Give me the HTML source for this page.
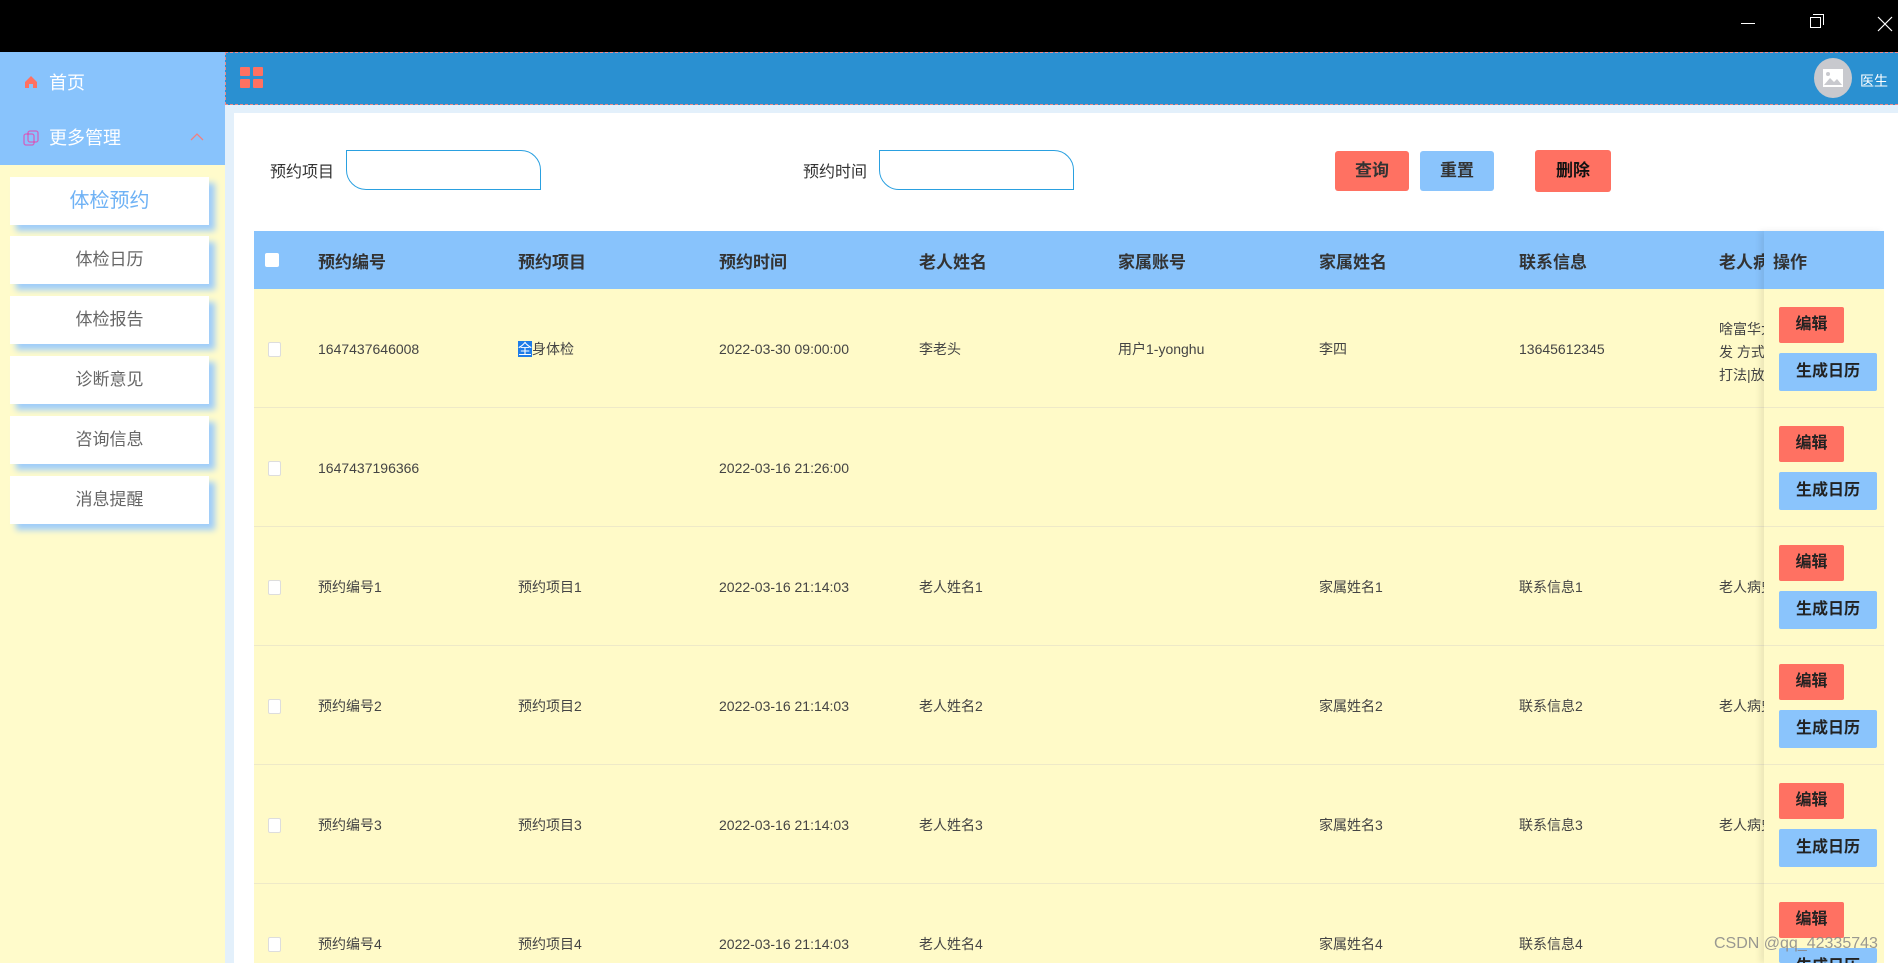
<!DOCTYPE html>
<html style="overflow:hidden;height:963px"><head><meta charset="utf-8">
<style>
*{box-sizing:border-box;margin:0;padding:0}
html{width:1898px;height:963px;overflow:hidden}
body{width:1898px;height:963px;overflow:hidden;position:relative;background:#fff;font-family:"Liberation Sans","Noto Sans CJK SC",sans-serif;}
.a{position:absolute}
.top{left:0;top:0;width:1898px;height:52px;background:#000}
.side{left:0;top:52px;width:225px;height:911px;background:#fffbcb}
.sideTop{left:0;top:52px;width:225px;height:113px;background:#88c3fc}
.mi{color:#fff;font-size:18px}
.card{left:10px;width:199px;height:48px;background:#fff;box-shadow:6px 6px 6px #9fcdfa;text-align:center;line-height:48px;color:#666;font-size:17px}
.hdr{left:225px;top:52px;width:1673px;height:53px;background:#2a90d1;border-top:1px dashed #e88;border-bottom:1px dashed #e88;border-left:1px dashed #e88}
.strip{left:225px;top:105px;width:1673px;height:858px;background:#e3f0fb}
.main{left:234px;top:113px;width:1664px;height:850px;background:#fff}
.lbl{font-size:16px;color:#333}
.inp{height:40px;width:195px;border:1px solid #2aa0e0;border-radius:0 20px 0 20px;background:#fff}
.btn{height:40px;font-size:17px;font-weight:bold;color:#333;text-align:center;line-height:40px;border-radius:3px}
.red{background:#ff7162}.blue{background:#8ac4fc}
.th{left:254px;top:231px;width:1630px;height:58px;background:#88c3fc}
.row{left:254px;width:1630px;height:119px;background:#fffac8;border-bottom:1px solid #eee9c8}
.h{font-size:17px;font-weight:bold;color:#333;top:248px}
.c{font-size:14px;color:#444;line-height:16px}
.cb{width:13px;height:15px;background:#fff;border:1px solid #ddd;border-radius:2px}
.op{left:1764px;top:231px;width:120px;height:732px;box-shadow:-4px 0 6px rgba(0,0,0,0.08)}
.ob{font-size:16px;font-weight:bold;color:#222;text-align:center;border-radius:2px}
</style></head><body>
<div class="a top"></div>
<div class="a" style="left:1741px;top:23px;width:14px;height:1px;background:#fff"></div>
<div class="a" style="left:1810px;top:17px;width:11px;height:11px;border:1px solid #fff"></div>
<div class="a" style="left:1813px;top:14px;width:11px;height:11px;border-top:1px solid #fff;border-right:1px solid #fff"></div>
<svg class="a" style="left:1877px;top:16px" width="16" height="16"><path d="M1 1L15 15M15 1L1 15" stroke="#fff" stroke-width="1.2"/></svg>

<div class="a side"></div>
<div class="a sideTop"></div>
<svg class="a" style="left:24px;top:75px" width="14" height="14"><path d="M7 1L1 7V13H5V9H9V13H13V7Z" fill="#ff7162"/></svg>
<div class="a mi" style="left:49px;top:69px">首页</div>
<svg class="a" style="left:23px;top:130px" width="16" height="16"><rect x="5" y="1" width="10" height="11" rx="2" fill="none" stroke="#f29" stroke-opacity=".6" stroke-width="1.3"/><rect x="1" y="4" width="10" height="11" rx="2" fill="none" stroke="#f29" stroke-opacity=".6" stroke-width="1.3"/></svg>
<div class="a mi" style="left:49px;top:124px">更多管理</div>
<svg class="a" style="left:190px;top:133px" width="14" height="8"><path d="M1 7L7 1L13 7" fill="none" stroke="#f08080" stroke-width="1.3"/></svg>
<div class="a card" style="top:177px;color:#6fb2f5;font-size:20px">体检预约</div>
<div class="a card" style="top:236px">体检日历</div>
<div class="a card" style="top:296px">体检报告</div>
<div class="a card" style="top:356px">诊断意见</div>
<div class="a card" style="top:416px">咨询信息</div>
<div class="a card" style="top:476px">消息提醒</div>

<div class="a hdr"></div>
<div class="a" style="left:240px;top:67px;width:10px;height:9px;background:#ff7162;border-radius:1px"></div>
<div class="a" style="left:253px;top:67px;width:10px;height:9px;background:#ff7162;border-radius:1px"></div>
<div class="a" style="left:240px;top:79px;width:10px;height:9px;background:#ff7162;border-radius:1px"></div>
<div class="a" style="left:253px;top:79px;width:10px;height:9px;background:#ff7162;border-radius:1px"></div>
<div class="a" style="left:1814px;top:58px;width:38px;height:40px;border-radius:50%;background:#c8c9ce"></div>
<svg class="a" style="left:1822px;top:68px" width="22" height="20"><rect x="1" y="1" width="20" height="18" fill="#fff"/><circle cx="6" cy="6" r="2" fill="#c8c9ce"/><path d="M2 17L8 10L12 14L15 11L20 17Z" fill="#c8c9ce"/></svg>
<div class="a" style="left:1860px;top:71px;color:#fff;font-size:14px">医生</div>

<div class="a strip"></div>
<div class="a main"></div>
<div class="a lbl" style="left:270px;top:158px">预约项目</div>
<div class="a inp" style="left:346px;top:150px"></div>
<div class="a lbl" style="left:803px;top:158px">预约时间</div>
<div class="a inp" style="left:879px;top:150px"></div>
<div class="a btn red" style="left:1335px;top:151px;width:74px">查询</div>
<div class="a btn blue" style="left:1420px;top:151px;width:74px">重置</div>
<div class="a btn red" style="left:1535px;top:150px;width:76px;height:42px;line-height:42px;color:#111">删除</div>

<div class="a th"></div>
<div class="a" style="left:265px;top:253px;width:14px;height:14px;background:#fff;border-radius:2px"></div>
<div class="a h" style="left:318px">预约编号</div>
<div class="a h" style="left:518px">预约项目</div>
<div class="a h" style="left:719px">预约时间</div>
<div class="a h" style="left:919px">老人姓名</div>
<div class="a h" style="left:1118px">家属账号</div>
<div class="a h" style="left:1319px">家属姓名</div>
<div class="a h" style="left:1519px">联系信息</div>
<div class="a h" style="left:1719px;width:45px;overflow:hidden;white-space:nowrap">老人病史</div>
<div class="a h" style="left:1773px">操作</div>

<div class="a row" style="top:289px"></div>
<div class="a row" style="top:408px"></div>
<div class="a row" style="top:527px"></div>
<div class="a row" style="top:646px"></div>
<div class="a row" style="top:765px"></div>
<div class="a row" style="top:884px;height:79px;border:none"></div>

<div class="a cb" style="left:268px;top:342px"></div>
<div class="a c" style="left:318px;top:341px">1647437646008</div>
<div class="a c" style="left:518px;top:341px"><span style="background:#1e7ce8;color:#fff">全</span>身体检</div>
<div class="a c" style="left:719px;top:341px">2022-03-30 09:00:00</div>
<div class="a c" style="left:919px;top:341px">李老头</div>
<div class="a c" style="left:1118px;top:341px">用户1-yonghu</div>
<div class="a c" style="left:1319px;top:341px">李四</div>
<div class="a c" style="left:1519px;top:341px">13645612345</div>
<div class="a c" style="left:1719px;top:318px;width:45px;overflow:hidden;white-space:nowrap;line-height:23px">啥富华大<br>发 方式<br>打法|放</div>
<div class="a cb" style="left:268px;top:461px"></div>
<div class="a c" style="left:318px;top:460px">1647437196366</div>
<div class="a c" style="left:719px;top:460px">2022-03-16 21:26:00</div>

<div class="a cb" style="left:268px;top:580px"></div>
<div class="a c" style="left:318px;top:579px">预约编号1</div><div class="a c" style="left:518px;top:579px">预约项目1</div><div class="a c" style="left:719px;top:579px">2022-03-16 21:14:03</div><div class="a c" style="left:919px;top:579px">老人姓名1</div><div class="a c" style="left:1319px;top:579px">家属姓名1</div><div class="a c" style="left:1519px;top:579px">联系信息1</div><div class="a c" style="left:1719px;top:579px;width:45px;overflow:hidden;white-space:nowrap">老人病史1</div>
<div class="a cb" style="left:268px;top:699px"></div>
<div class="a c" style="left:318px;top:698px">预约编号2</div><div class="a c" style="left:518px;top:698px">预约项目2</div><div class="a c" style="left:719px;top:698px">2022-03-16 21:14:03</div><div class="a c" style="left:919px;top:698px">老人姓名2</div><div class="a c" style="left:1319px;top:698px">家属姓名2</div><div class="a c" style="left:1519px;top:698px">联系信息2</div><div class="a c" style="left:1719px;top:698px;width:45px;overflow:hidden;white-space:nowrap">老人病史2</div>
<div class="a cb" style="left:268px;top:818px"></div>
<div class="a c" style="left:318px;top:817px">预约编号3</div><div class="a c" style="left:518px;top:817px">预约项目3</div><div class="a c" style="left:719px;top:817px">2022-03-16 21:14:03</div><div class="a c" style="left:919px;top:817px">老人姓名3</div><div class="a c" style="left:1319px;top:817px">家属姓名3</div><div class="a c" style="left:1519px;top:817px">联系信息3</div><div class="a c" style="left:1719px;top:817px;width:45px;overflow:hidden;white-space:nowrap">老人病史3</div>
<div class="a cb" style="left:268px;top:937px"></div>
<div class="a c" style="left:318px;top:936px">预约编号4</div><div class="a c" style="left:518px;top:936px">预约项目4</div><div class="a c" style="left:719px;top:936px">2022-03-16 21:14:03</div><div class="a c" style="left:919px;top:936px">老人姓名4</div><div class="a c" style="left:1319px;top:936px">家属姓名4</div><div class="a c" style="left:1519px;top:936px">联系信息4</div>

<div class="a op"></div>
<div class="a ob red" style="left:1779px;top:307px;width:65px;height:36px;line-height:36px">编辑</div>
<div class="a ob blue" style="left:1779px;top:353px;width:98px;height:38px;line-height:38px">生成日历</div>
<div class="a ob red" style="left:1779px;top:426px;width:65px;height:36px;line-height:36px">编辑</div>
<div class="a ob blue" style="left:1779px;top:472px;width:98px;height:38px;line-height:38px">生成日历</div>
<div class="a ob red" style="left:1779px;top:545px;width:65px;height:36px;line-height:36px">编辑</div>
<div class="a ob blue" style="left:1779px;top:591px;width:98px;height:38px;line-height:38px">生成日历</div>
<div class="a ob red" style="left:1779px;top:664px;width:65px;height:36px;line-height:36px">编辑</div>
<div class="a ob blue" style="left:1779px;top:710px;width:98px;height:38px;line-height:38px">生成日历</div>
<div class="a ob red" style="left:1779px;top:783px;width:65px;height:36px;line-height:36px">编辑</div>
<div class="a ob blue" style="left:1779px;top:829px;width:98px;height:38px;line-height:38px">生成日历</div>
<div class="a ob red" style="left:1779px;top:902px;width:65px;height:36px;line-height:36px">编辑</div>
<div class="a ob blue" style="left:1779px;top:948px;width:98px;height:15px;line-height:38px;overflow:hidden">生成日历</div>
<div class="a" style="left:1714px;top:935px;font-size:16px;color:#888;opacity:.85">CSDN @qq_42335743</div>
</body></html>
